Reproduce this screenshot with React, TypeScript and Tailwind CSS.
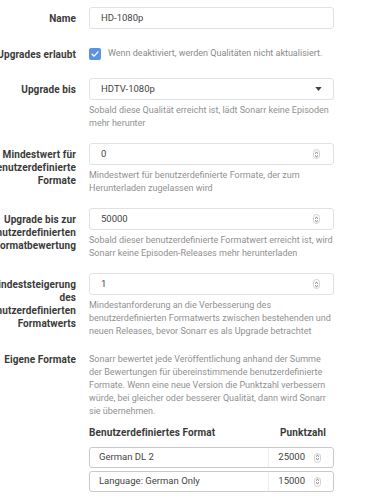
const FONT = "font-['Roboto','Noto_Sans',sans-serif]";

function Label({ children }: { children: React.ReactNode }) {
  return (
    <div className="w-[110px] shrink-0 pr-[13px] pt-[5px] text-right text-[10px] font-bold leading-[13px] tracking-[0.1px] text-[#3a3a3a]">
      {children}
    </div>
  );
}

function Help({ children }: { children: React.ReactNode }) {
  return <p className="mt-[4px] text-[9px] leading-[13px] text-[#909090]">{children}</p>;
}

function Spinner() {
  return (
    <span className="flex h-[10px] w-[7px] items-center justify-center rounded-full border border-[#cfcfcf]">
      <svg viewBox="0 0 6 9" className="h-[7px] w-[5px]" fill="none" stroke="#555" strokeWidth="1.1" strokeLinecap="round" strokeLinejoin="round">
        <path d="M1.5 3 L3 1.6 L4.5 3" />
        <path d="M1.5 6 L3 7.4 L4.5 6" />
      </svg>
    </span>
  );
}

function NumberInput({ value }: { value: string }) {
  return (
    <div className="flex h-[22px] w-[245px] items-center justify-between rounded-[3px] border border-[#dfe2e5] bg-white pl-[11px] pr-[13px] text-[9.5px] text-[#444]">
      <span>{value}</span>
      <Spinner />
    </div>
  );
}

const FORMAT_SCORES = [
  { name: 'German DL 2', score: '25000' },
  { name: 'Language: German Only', score: '15000' },
];

export default function App() {
  return (
    <div className={`${FONT} h-[500px] overflow-hidden bg-white pt-[7px]`}>
      <div className="ml-[-21px] flex flex-col">
        <div className="mb-[14px] flex">
          <Label>Name</Label>
          <div className="flex h-[22px] w-[245px] items-center rounded-[3px] border border-[#dfe2e5] pl-[11px] text-[9.5px] text-[#444]">
            HD-1080p
          </div>
        </div>

        <div className="mb-[13px] flex">
          <Label>Upgrades erlaubt</Label>
          <div className="flex h-[22px] items-center gap-[7px]">
            <span className="flex h-[12px] w-[12px] items-center justify-center rounded-[2px] bg-[#5b93e0]">
              <svg viewBox="0 0 12 12" className="h-[10px] w-[10px]" fill="none" stroke="white" strokeWidth="1.6" strokeLinecap="round" strokeLinejoin="round">
                <path d="M2.5 6.2 L5 8.6 L9.6 3.4" />
              </svg>
            </span>
            <span className="text-[9px] text-[#8a8a8a]">Wenn deaktiviert, werden Qualitäten nicht aktualisiert.</span>
          </div>
        </div>

        <div className="mb-[13px] flex">
          <Label>Upgrade bis</Label>
          <div className="w-[245px]">
            <div className="flex h-[22px] items-center justify-between rounded-[3px] border border-[#dfe2e5] pl-[11px] pr-[11px] text-[9.5px] text-[#444]">
              <span>HDTV-1080p</span>
              <svg viewBox="0 0 8 5" className="h-[4px] w-[7px]" fill="#444">
                <path d="M0 0 H8 L4 5 Z" />
              </svg>
            </div>
            <Help>Sobald diese Qualität erreicht ist, lädt Sonarr keine Episoden mehr herunter</Help>
          </div>
        </div>

        <div className="mb-[13px] flex">
          <Label>Mindestwert für benutzerdefinierte Formate</Label>
          <div className="w-[245px]">
            <NumberInput value="0" />
            <Help>Mindestwert für benutzerdefinierte Formate, der zum Herunterladen zugelassen wird</Help>
          </div>
        </div>

        <div className="mb-[13px] flex">
          <Label>Upgrade bis zur benutzerdefinierten Formatbewertung</Label>
          <div className="w-[245px]">
            <NumberInput value="50000" />
            <Help>Sobald dieser benutzerdefinierte Formatwert erreicht ist, wird Sonarr keine Episoden-Releases mehr herunterladen</Help>
          </div>
        </div>

        <div className="mb-[15px] flex">
          <Label>Mindeststeigerung des benutzerdefinierten Formatwerts</Label>
          <div className="w-[245px]">
            <NumberInput value="1" />
            <Help>Mindestanforderung an die Verbesserung des benutzerdefinierten Formatwerts zwischen bestehenden und neuen Releases, bevor Sonarr es als Upgrade betrachtet</Help>
          </div>
        </div>

        <div className="flex">
          <div className="w-[110px] shrink-0 pr-[13px] text-right text-[10px] font-bold leading-[13px] tracking-[0.1px] text-[#3a3a3a]">
            Eigene Formate
          </div>
          <div className="w-[245px]">
            <p className="text-[9px] leading-[13px] text-[#909090]">
              Sonarr bewertet jede Veröffentlichung anhand der Summe der Bewertungen für übereinstimmende benutzerdefinierte Formate. Wenn eine neue Version die Punktzahl verbessern würde, bei gleicher oder besserer Qualität, dann wird Sonarr sie übernehmen.
            </p>
            <div className="mt-[8px] flex justify-between pr-[8px] text-[10px] font-bold leading-[13px] tracking-[0.1px] text-[#3a3a3a]">
              <span>Benutzerdefiniertes Format</span>
              <span>Punktzahl</span>
            </div>
            <div className="mt-[8px] flex flex-col gap-[3px]">
              {FORMAT_SCORES.map((f) => (
                <div key={f.name} className="flex h-[21px] items-center rounded-[3px] border border-[#c9c9c9] text-[9.5px] text-[#444]">
                  <span className="flex-1 pl-[9px]">{f.name}</span>
                  <div className="flex h-full w-[65px] items-center justify-end gap-[9px] border-l border-[#eeeeee] pr-[12px]">
                    <span>{f.score}</span>
                    <Spinner />
                  </div>
                </div>
              ))}
            </div>
          </div>
        </div>
      </div>
    </div>
  );
}
